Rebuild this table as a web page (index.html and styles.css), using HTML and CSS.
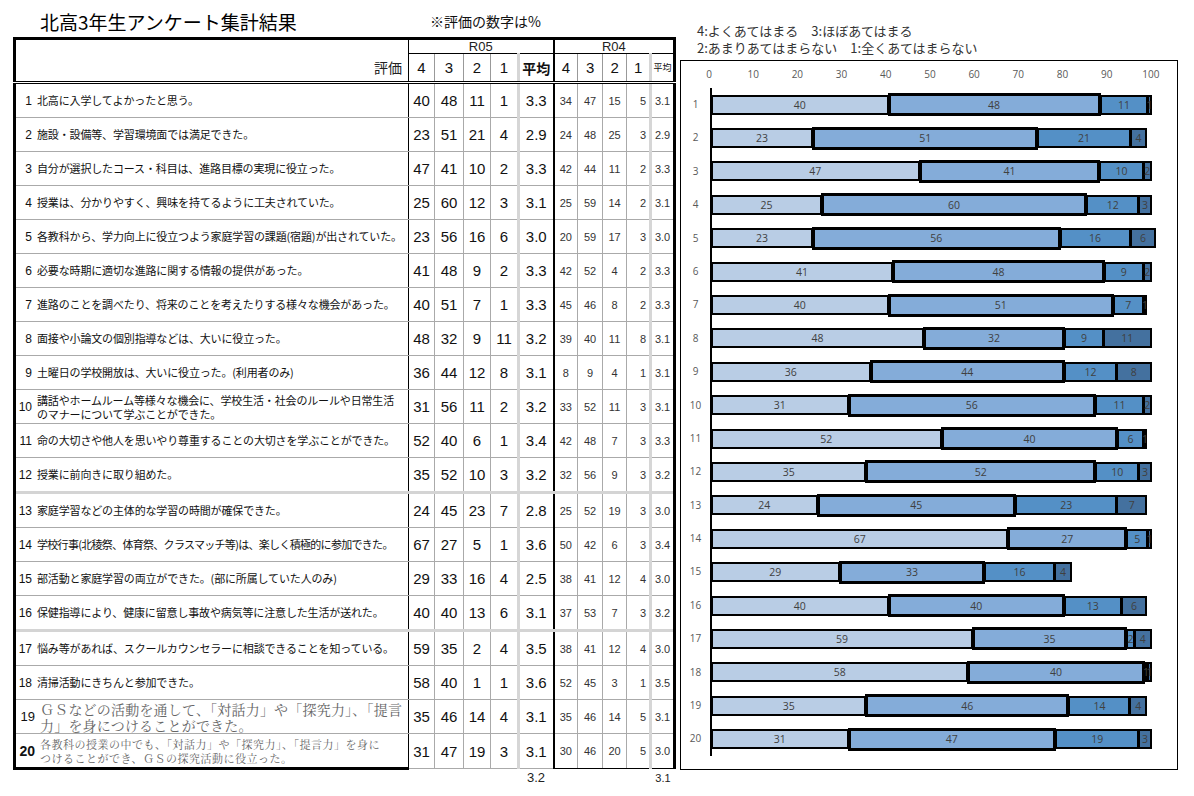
FILE: index.html
```html
<!DOCTYPE html>
<html lang="ja">
<head>
  <meta charset="UTF-8" />
  <title>北高3年生アンケート集計結果</title>
  <link rel="stylesheet" href="styles.css">
</head>
<body>

<div class="page">
  <section class="survey">
    <div class="heading">
      <h1>北高3年生アンケート集計結果</h1>
      <span class="note">※評価の数字は%</span>
    </div>

    <table class="results">
      <colgroup>
        <col style="width:394px"><col style="width:26px"><col style="width:29px"><col style="width:27px"><col style="width:28px"><col style="width:35px">
        <col style="width:24px"><col style="width:25px"><col style="width:24px"><col style="width:24px"><col style="width:24px">
      </colgroup>
      <thead>
        <tr class="years">
          <th class="item-head" rowspan="2">評価</th>
          <th class="year now" colspan="5">R05</th>
          <th class="year prev" colspan="5">R04</th>
        </tr>
        <tr class="grades">
          <th>4</th><th>3</th><th>2</th><th class="before-avg">1</th><th class="avg">平均</th>
          <th>4</th><th>3</th><th>2</th><th class="before-avg">1</th><th class="avg small">平均</th>
        </tr>
      </thead>
      <tbody id="rows"></tbody>
      <tfoot>
        <tr>
          <td></td><td></td><td></td><td></td><td></td><td class="total">3.2</td>
          <td></td><td></td><td></td><td></td><td class="total small">3.1</td>
        </tr>
      </tfoot>
    </table>
  </section>

  <section class="chart-side">
    <p class="legend">4:よくあてはまる　3:ほぼあてはまる<br>2:あまりあてはまらない　1:全くあてはまらない</p>
    <div class="chart">
      <div class="ticks">
        <span>0</span><span>10</span><span>20</span><span>30</span><span>40</span><span>50</span>
        <span>60</span><span>70</span><span>80</span><span>90</span><span>100</span>
      </div>
      <div class="plot">
        <div class="labels" id="labels"></div>
        <div class="bars" id="bars"></div>
      </div>
    </div>
  </section>
</div>

<script>
  const rows = [
    [1, '北高に入学してよかったと思う。', [40, 48, 11, 1, '3.3'], [34, 47, 15, 5, '3.1']],
    [2, '施設・設備等、学習環境面では満足できた。', [23, 51, 21, 4, '2.9'], [24, 48, 25, 3, '2.9']],
    [3, '自分が選択したコース・科目は、進路目標の実現に役立った。', [47, 41, 10, 2, '3.3'], [42, 44, 11, 2, '3.3']],
    [4, '授業は、分かりやすく、興味を持てるように工夫されていた。', [25, 60, 12, 3, '3.1'], [25, 59, 14, 2, '3.1']],
    [5, '各教科から、学力向上に役立つよう家庭学習の課題(宿題)が出されていた。', [23, 56, 16, 6, '3.0'], [20, 59, 17, 3, '3.0']],
    [6, '必要な時期に適切な進路に関する情報の提供があった。', [41, 48, 9, 2, '3.3'], [42, 52, 4, 2, '3.3']],
    [7, '進路のことを調べたり、将来のことを考えたりする様々な機会があった。', [40, 51, 7, 1, '3.3'], [45, 46, 8, 2, '3.3']],
    [8, '面接や小論文の個別指導などは、大いに役立った。', [48, 32, 9, 11, '3.2'], [39, 40, 11, 8, '3.1']],
    [9, '土曜日の学校開放は、大いに役立った。(利用者のみ)', [36, 44, 12, 8, '3.1'], [8, 9, 4, 1, '3.1']],
    [10, '講話やホームルーム等様々な機会に、学校生活・社会のルールや日常生活<br>のマナーについて学ぶことができた。', [31, 56, 11, 2, '3.2'], [33, 52, 11, 3, '3.1'], 'wrap'],
    [11, '命の大切さや他人を思いやり尊重することの大切さを学ぶことができた。', [52, 40, 6, 1, '3.4'], [42, 48, 7, 3, '3.3']],
    [12, '授業に前向きに取り組めた。', [35, 52, 10, 3, '3.2'], [32, 56, 9, 3, '3.2']],
    [13, '家庭学習などの主体的な学習の時間が確保できた。', [24, 45, 23, 7, '2.8'], [25, 52, 19, 3, '3.0'], 'sep'],
    [14, '学校行事(北稜祭、体育祭、クラスマッチ等)は、楽しく積極的に参加できた。', [67, 27, 5, 1, '3.6'], [50, 42, 6, 3, '3.4'], 'tight'],
    [15, '部活動と家庭学習の両立ができた。(部に所属していた人のみ)', [29, 33, 16, 4, '2.5'], [38, 41, 12, 4, '3.0']],
    [16, '保健指導により、健康に留意し事故や病気等に注意した生活が送れた。', [40, 40, 13, 6, '3.1'], [37, 53, 7, 3, '3.2']],
    [17, '悩み等があれば、スクールカウンセラーに相談できることを知っている。', [59, 35, 2, 4, '3.5'], [38, 41, 12, 4, '3.0'], 'sep'],
    [18, '清掃活動にきちんと参加できた。', [58, 40, 1, 1, '3.6'], [52, 45, 3, 1, '3.5']],
    [19, 'ＧＳなどの活動を通して、「対話力」や「探究力」、「提言<br>力」を身につけることができた。', [35, 46, 14, 4, '3.1'], [35, 46, 14, 5, '3.1'], 'boxed gs'],
    [20, '各教科の授業の中でも、「対話力」や「探究力」、「提言力」を身に<br>つけることができ、ＧＳの探究活動に役立った。', [31, 47, 19, 3, '3.1'], [30, 46, 20, 5, '3.0'], 'boxed gs-small last']
  ];

  const body = document.getElementById('rows');
  const labels = document.getElementById('labels');
  const bars = document.getElementById('bars');
  const unit = 4.437; // px per %

  rows.forEach(([no, text, now, prev, cls]) => {
    const tr = document.createElement('tr');
    if (cls) tr.className = cls;
    tr.innerHTML =
      `<td class="item"><div class="item-wrap"><span class="no">${no}</span><span class="text">${text}</span></div></td>` +
      now.map((v, i) => `<td class="num${i === 3 ? ' before-avg' : ''}${i === 4 ? ' avg' : ''}">${v}</td>`).join('') +
      prev.map((v, i) => `<td class="old${i === 3 ? ' before-avg right' : ''}${i === 4 ? ' avg' : ''}">${v}</td>`).join('');
    body.appendChild(tr);

    const label = document.createElement('span');
    label.textContent = no;
    labels.appendChild(label);

    const row = document.createElement('div');
    row.className = 'bar-row';
    row.innerHTML = '<div class="bar">' + now.slice(0, 4).map((v, i) =>
      `<span class="seg s${4 - i}" style="width:${(v * unit).toFixed(1)}px"><em>${v}</em></span>`).join('') + '</div>';
    bars.appendChild(row);
  });
</script>
</body>
</html>
```

FILE: styles.css
```css
body {
  margin: 0;
  font-family: "Noto Sans CJK JP", sans-serif;
  color: #111;
  background: #fff;
}
.page {
  display: flex;
  gap: 7px;
  width: 1194px;
  height: 796px;
}

/* left: table */
.survey {
  padding-left: 13px;
  width: 660px;
}
.heading {
  display: grid;
  grid-template-columns: 417px 1fr;
  align-items: end;
  height: 37px;
}
.heading h1 {
  margin: 0 0 3px 27px;
  font-size: 19px;
  font-weight: normal;
  line-height: 24px;
  color: #000;
}
.note {
  font-size: 14px;
  line-height: 20px;
  margin-bottom: 6px;
}
.results {
  width: 660px;
  table-layout: fixed;
  border-collapse: collapse;
}
.results th,
.results td {
  padding: 0;
  text-align: center;
  font-weight: normal;
  font-family: "Liberation Sans Narrow", "Liberation Sans", "Noto Sans CJK JP", sans-serif;
}
.results th {
  border-right: 1px solid #999;
}
.years th {
  height: 13px;
  border-top: 3px solid #000;
  font-size: 13px;
  line-height: 13px;
  color: #222;
}
.years .year {
  border-bottom: 1px solid #000;
}
.years .now {
  border-left: 1px solid #000;
  border-right: 2px solid #000;
}
.years .prev {
  border-right: 3px solid #000;
}
.results .item-head {
  border-left: 3px solid #000;
  border-right: 1px solid #000;
  border-bottom: 3px double #000;
  text-align: right;
  vertical-align: bottom;
  padding: 0 6px 6px 0;
  font-family: "Noto Sans CJK JP", sans-serif;
  font-size: 14px;
  line-height: 16px;
}
.grades th {
  height: 27px;
  border-bottom: 3px double #000;
  font-size: 15px;
}
.grades th.avg {
  font-family: "Noto Sans CJK JP", sans-serif;
  font-size: 14px;
  font-weight: bold;
  border-right: 2px solid #000;
}
.grades th.avg.small {
  font-size: 9px;
  font-weight: normal;
  border-right: 3px solid #000;
}
.results .before-avg {
  border-right: 3px solid #d6d6d6;
}

/* body rows */
.results tbody td {
  height: 33px;
  border-bottom: 1px solid #aaa;
  border-right: 1px solid #aaa;
}
.results tbody tr.sep td {
  border-top: 3px solid #d4d4d4;
}
.results td.item {
  text-align: left;
  border-left: 3px solid #000;
  border-right: 1px solid #000;
  padding-left: 2px;
}
.item-wrap {
  display: flex;
  align-items: center;
}
.no {
  flex: none;
  width: 14px;
  margin-right: 5px;
  text-align: right;
  font-family: "Liberation Sans", sans-serif;
  font-size: 12px;
}
.text {
  font-family: "Noto Sans CJK JP", sans-serif;
  font-size: 11px;
  line-height: 13px;
  letter-spacing: -0.15px;
}
.wrap .text {
  line-height: 14px;
}
.tight .text {
  letter-spacing: -0.7px;
  white-space: nowrap;
}
.results td.num {
  font-size: 15px;
  color: #111;
}
.results td.num.avg {
  border-right: 2px solid #000;
}
.results td.old {
  font-size: 11px;
  color: #333;
}
.results td.old.right {
  text-align: right;
  padding-right: 3px;
}
.results td.old.avg {
  border-right: 3px solid #000;
}
.results tbody tr.boxed td.item,
.results tbody tr.boxed td.num {
  border-top: 1px solid #000;
}
.gs .no,
.gs-small .no {
  width: 17px;
  margin-right: 5px;
  font-size: 13px;
}
.gs-small .no {
  font-weight: bold;
  font-size: 14px;
}
.gs .text {
  font-family: "Noto Serif CJK JP", "Liberation Serif", "Noto Sans CJK JP", serif;
  font-size: 14px;
  line-height: 16px;
  letter-spacing: 0.2px;
  color: #666;
}
.gs-small .text {
  font-family: "Noto Serif CJK JP", "Liberation Serif", "Noto Sans CJK JP", serif;
  font-size: 11px;
  line-height: 14px;
  letter-spacing: 0.5px;
  color: #666;
}
.results tbody tr.last td.item {
  border-bottom: 3px solid #000;
}
.results tbody tr.last td.old {
  border-bottom: 1px solid #000;
}
.results tfoot td {
  height: 16px;
  border: none;
}
.results td.total {
  font-size: 13px;
  color: #222;
}
.results td.total.small {
  font-size: 11px;
  text-align: right;
  padding-right: 4px;
}

/* right: chart */
.chart-side {
  width: 498px;
  padding-top: 22px;
}
.legend {
  margin: 0 0 4px 17px;
  font-size: 13px;
  line-height: 17px;
  color: #333;
}
.chart {
  box-sizing: border-box;
  height: 710px;
  border: 1px solid #000;
}
.ticks {
  display: flex;
  margin-left: 5.9px;
  padding-top: 6px;
  height: 14px;
  font-family: "Open Sans", sans-serif;
  font-size: 10px;
  line-height: 14px;
  color: #595959;
}
.ticks span {
  flex: none;
  width: 44.2px;
  text-align: center;
}
.plot {
  display: flex;
  margin-top: 7px;
}
.labels {
  display: flex;
  flex-direction: column;
  width: 29px;
  font-family: "Open Sans", sans-serif;
  font-size: 10px;
  color: #595959;
}
.labels span {
  height: 33.4px;
  line-height: 33.4px;
  text-align: center;
}
.bars {
  border-left: 2px solid #000;
}
.bar-row {
  height: 33.4px;
  display: flex;
  align-items: center;
}
.bar {
  display: flex;
  align-items: center;
  margin-left: -1px;
}
.seg {
  box-sizing: border-box;
  flex: none;
  display: flex;
  justify-content: center;
  align-items: center;
  height: 20px;
  border: 2px solid #000;
  margin-right: -1px;
  overflow: visible;
}
.seg em {
  font-style: normal;
  font-family: "Open Sans", sans-serif;
  font-size: 10.5px;
  color: #404040;
  white-space: nowrap;
}
.s4 { background: #b9cde5; }
.s3 {
  background: #84acd9;
  height: 23px;
  border-width: 3px;
}
.s2 { background: #5490c6; }
.s1 { background: #44719f; }
```
